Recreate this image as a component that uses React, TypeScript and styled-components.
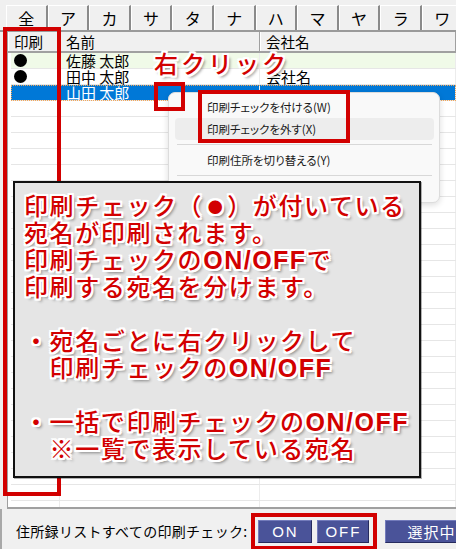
import React from "react";
import styled, { createGlobalStyle, css } from "styled-components";

const RED = "#d20000";
const CJK = `"Noto Sans CJK JP", "Noto Sans", sans-serif`;

const GlobalStyle = createGlobalStyle`
  html, body { margin: 0; padding: 0; background: #f0f0f0; }
  body { font-family: ${CJK}; width: 456px; height: 549px; overflow: hidden; }
  * { box-sizing: border-box; }
`;

const Screen = styled.div`
  position: relative;
  width: 456px;
  height: 549px;
  overflow: hidden;
  display: flex;
  flex-direction: column;
  background: #f0f0f0;
`;

const TabBar = styled.div`
  flex: 0 0 32px;
  padding: 5px 0 0 6px;
  display: flex;
  border-bottom: 2px solid #9a9a9a;
  overflow: hidden;
`;

const Tab = styled.div`
  flex: 0 0 41.6px;
  height: 25px;
  display: flex;
  align-items: center;
  justify-content: center;
  border-top: 1px solid #ffffff;
  border-left: 1px solid #ffffff;
  border-right: 2px solid #8a8a8a;
  font-size: 16px;
  line-height: 1;
  color: #000;
`;

const ListArea = styled.div`
  flex: 1 1 auto;
  margin-left: 7px;
  border-left: 1px solid #a0a0a0;
  border-bottom: 2px solid #a0a0a0;
  background: #ffffff;
  overflow: hidden;
  display: flex;
  flex-direction: column;
`;

const HeaderRow = styled.div`
  flex: 0 0 21px;
  display: grid;
  grid-template-columns: 52px 200px 1fr;
  background: #f0f0f0;
  border-bottom: 2px solid #a0a0a0;
`;

const HeaderCell = styled.div`
  display: flex;
  align-items: center;
  padding-left: 6px;
  font-size: 14.5px;
  line-height: 18px;
  color: #000;
  border-right: 1px solid #a0a0a0;
  box-shadow: inset 1px 0 0 #ffffff;
`;

const Row = styled.div<{ $variant: "green" | "plain" | "selected" }>`
  flex: 0 0 16px;
  margin-left: 3px;
  display: grid;
  grid-template-columns: 49px 200px 1fr;
  border-bottom: 1px solid #e6e6e6;
  font-size: 15px;
  line-height: 15px;
  color: #000;
  ${(p) =>
    p.$variant === "green" &&
    css`
      background: #f0fae8;
    `}
  ${(p) =>
    p.$variant === "selected" &&
    css`
      background: #0078d7;
      color: #ffffff;
      outline: 1px dotted #f2a65a;
      outline-offset: -1px;
    `}
`;

const Cell = styled.div`
  display: flex;
  align-items: center;
  padding-left: 6px;
  white-space: nowrap;
  border-right: 1px solid #ececec;
`;

const CheckCell = styled.div`
  display: flex;
  align-items: center;
  padding-left: 3px;
  border-right: 1px solid #ececec;
`;

const Dot = styled.span`
  width: 13px;
  height: 13px;
  border-radius: 50%;
  background: #000;
`;

const BottomBar = styled.div`
  flex: 0 0 40px;
  padding: 4px 0 0 14px;
  display: flex;
  align-items: center;
  border-left: 2px solid #a8a8a8;
  background: #f0f0f0;
  overflow: hidden;
`;

const BarLabel = styled.span`
  font-size: 14px;
  line-height: 18px;
  white-space: nowrap;
  color: #000;
  letter-spacing: 0.3px;
`;

const OnOffGroup = styled.div`
  margin-left: 4px;
  display: flex;
  gap: 5px;
  padding: 3px 4px 3px 3px;
  border: 4px solid ${RED};
`;

const BlueButton = styled.div<{ $w: number }>`
  flex: 0 0 ${(p) => p.$w}px;
  height: 23px;
  display: flex;
  align-items: center;
  justify-content: center;
  background: #4a5399;
  color: #ffffff;
  border: 1px solid;
  border-color: #737bbb #262b5e #262b5e #737bbb;
  font-family: "Liberation Sans", Arial, sans-serif;
  font-size: 15px;
  letter-spacing: 2px;
  line-height: 1;
`;

const SelectButton = styled(BlueButton)`
  margin-left: 8px;
  justify-content: flex-start;
  padding-left: 21px;
  font-family: ${CJK};
  letter-spacing: 1px;
  white-space: nowrap;
`;

const outlined = css`
  color: ${RED};
  text-shadow: -2px -2px 0 #fff, 0 -2px 0 #fff, 2px -2px 0 #fff, 2px 0 0 #fff,
    2px 2px 0 #fff, 0 2px 0 #fff, -2px 2px 0 #fff, -2px 0 0 #fff,
    -1px -2px 0 #fff, 1px -2px 0 #fff, -1px 2px 0 #fff, 1px 2px 0 #fff,
    3px 3px 3px rgba(0, 0, 0, 0.45);
`;

const RedFrame = styled.div<{ $x: number; $y: number; $w: number; $h: number }>`
  position: absolute;
  left: ${(p) => p.$x}px;
  top: ${(p) => p.$y}px;
  width: ${(p) => p.$w}px;
  height: ${(p) => p.$h}px;
  border: 4px solid ${RED};
  pointer-events: none;
`;

const RightClickLabel = styled.div`
  position: absolute;
  left: 154px;
  top: 48px;
  font-size: 24px;
  font-weight: 500;
  line-height: 30px;
  letter-spacing: 3px;
  white-space: nowrap;
  ${outlined}
`;

const ContextMenu = styled.div`
  position: absolute;
  left: 168px;
  top: 92px;
  width: 272px;
  height: 111px;
  padding: 3px 5px 2px 6px;
  background: #f9f9f9;
  border: 1px solid #dcdcdc;
  border-radius: 7px;
  box-shadow: 0 2px 6px rgba(0, 0, 0, 0.14);
  display: flex;
  flex-direction: column;
`;

const MenuItem = styled.div<{ $hover?: boolean }>`
  flex: 0 0 22px;
  display: flex;
  align-items: center;
  padding-left: 32px;
  border-radius: 4px;
  font-size: 11.5px;
  font-feature-settings: "palt";
  color: #1a1a1a;
  white-space: nowrap;
  background: ${(p) => (p.$hover ? "#ededed" : "transparent")};
`;

const MenuSeparator = styled.div`
  flex: 0 0 1px;
  margin: 4px 2px;
  background: #d8d8d8;
`;

const Callout = styled.div`
  position: absolute;
  left: 13px;
  top: 181px;
  width: 408px;
  height: 297px;
  padding: 8px 0 0 9px;
  background: #e5e5e5;
  border: 2px solid #111;
  box-shadow: 1px 1px 0 rgba(0, 0, 0, 0.3);
`;

const CalloutLine = styled.div`
  height: 27px;
  font-size: 24px;
  font-weight: 500;
  line-height: 27px;
  letter-spacing: 1.6px;
  white-space: pre;
  ${outlined}
`;

const Latin = styled.span`
  font-family: "Liberation Sans", Arial, sans-serif;
  font-weight: 700;
  font-size: 25px;
  letter-spacing: 1.5px;
`;

const SmallDot = styled.span`
  display: inline-block;
  width: 24px;
  text-align: center;
  font-size: 15px;
  vertical-align: 2px;
  letter-spacing: 0;
`;

const tabs = ["全", "ア", "カ", "サ", "タ", "ナ", "ハ", "マ", "ヤ", "ラ", "ワ"];

type RowData = {
  check: boolean;
  name: string;
  company: string;
  variant: "green" | "plain" | "selected";
};

const rows: RowData[] = [
  { check: true, name: "佐藤 太郎", company: "", variant: "green" },
  { check: true, name: "田中 太郎", company: "会社名", variant: "plain" },
  { check: false, name: "山田 太郎", company: "", variant: "selected" },
  ...Array.from({ length: 27 }, () => ({
    check: false,
    name: "",
    company: "",
    variant: "plain" as const,
  })),
];

const OnOff = () => <Latin>ON/OFF</Latin>;

export default function App() {
  return (
    <>
      <GlobalStyle />
      <Screen>
        <TabBar>
          {tabs.map((t) => (
            <Tab key={t}>{t}</Tab>
          ))}
        </TabBar>
        <ListArea>
          <HeaderRow>
            <HeaderCell>印刷</HeaderCell>
            <HeaderCell>名前</HeaderCell>
            <HeaderCell>会社名</HeaderCell>
          </HeaderRow>
          {rows.map((r, i) => (
            <Row key={i} $variant={r.variant}>
              <CheckCell>{r.check && <Dot />}</CheckCell>
              <Cell>{r.name}</Cell>
              <Cell>{r.company}</Cell>
            </Row>
          ))}
        </ListArea>
        <BottomBar>
          <BarLabel>住所録リストすべての印刷チェック:</BarLabel>
          <OnOffGroup>
            <BlueButton $w={54}>ON</BlueButton>
            <BlueButton $w={52}>OFF</BlueButton>
          </OnOffGroup>
          <SelectButton $w={110}>選択中の</SelectButton>
        </BottomBar>

        <RedFrame $x={3} $y={27} $w={58} $h={469} />
        <RightClickLabel>右クリック</RightClickLabel>
        <ContextMenu>
          <MenuItem>印刷チェックを付ける(W)</MenuItem>
          <MenuItem $hover>印刷チェックを外す(X)</MenuItem>
          <MenuSeparator />
          <MenuItem>印刷住所を切り替える(Y)</MenuItem>
          <MenuSeparator />
          <MenuItem>印刷</MenuItem>
        </ContextMenu>
        <RedFrame $x={154} $y={82} $w={31} $h={29} />
        <RedFrame $x={198} $y={90} $w={152} $h={53} />
        <Callout>
          <CalloutLine>
            印刷チェック（<SmallDot>●</SmallDot>）が付いている
          </CalloutLine>
          <CalloutLine>宛名が印刷されます。</CalloutLine>
          <CalloutLine>
            印刷チェックの<OnOff />で
          </CalloutLine>
          <CalloutLine>印刷する宛名を分けます。</CalloutLine>
          <CalloutLine />
          <CalloutLine>・宛名ごとに右クリックして</CalloutLine>
          <CalloutLine>
            {"　"}印刷チェックの<OnOff />
          </CalloutLine>
          <CalloutLine />
          <CalloutLine>
            ・一括で印刷チェックの<OnOff />
          </CalloutLine>
          <CalloutLine>{"　"}※一覧で表示している宛名</CalloutLine>
        </Callout>
      </Screen>
    </>
  );
}
